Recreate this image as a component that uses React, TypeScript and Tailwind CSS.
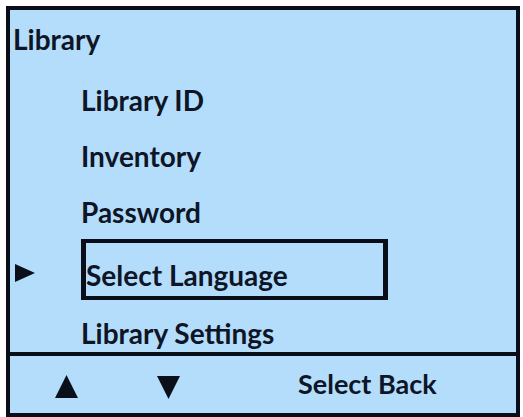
import React from "react";

const font = { fontFamily: "Lato, 'Open Sans', sans-serif" };

function Up() {
  return (
    <svg width="23" height="23" viewBox="0 0 23 23">
      <polygon points="11.5,0 23,23 0,23" fill="#0b0f1a" />
    </svg>
  );
}
function Down() {
  return (
    <svg width="23" height="23" viewBox="0 0 23 23">
      <polygon points="0,0 23,0 11.5,23" fill="#0b0f1a" />
    </svg>
  );
}
function Right() {
  return (
    <svg width="20" height="18" viewBox="0 0 20 18">
      <polygon points="0,0 20,9 0,18" fill="#0b0f1a" />
    </svg>
  );
}

export default function App() {
  return (
    <div className="w-[523px] h-[417px] bg-white pt-[6px] pl-[6px] overflow-hidden" style={font}>
      <div className="w-[514px] h-[411px] border-4 border-[#0a0e18] bg-[#b4ddfb] flex flex-col text-[#0d1526] font-bold">
        <div className="h-[346px] border-b-4 border-[#0a0e18] flex flex-col text-[28px] leading-[30px]">
          <div className="mt-[14px] pl-[3px]">Library</div>
          <div className="mt-[31px] pl-[71px]">Library ID</div>
          <div className="mt-[26px] pl-[71px]">Inventory</div>
          <div className="mt-[26px] pl-[71px]">Password</div>
          <div className="mt-[12px] pl-[5px] flex items-start">
            <div className="mt-[25px] w-[20px] h-[18px]">
              <Right />
            </div>
            <div className="ml-[46px] w-[307px] h-[61px] border-x-[5px] border-y-4 border-[#0a0e18] pt-[17px]">
              Select Language
            </div>
          </div>
          <div className="mt-[18px] pl-[71px]">Library Settings</div>
        </div>
        <div className="h-[53px] flex items-start">
          <div className="ml-[45px] w-[23px] h-[23px] mt-[19px]">
            <Up />
          </div>
          <div className="ml-[79px] w-[23px] h-[23px] mt-[20px]">
            <Down />
          </div>
          <div className="ml-[118px] text-[27px] leading-[30px] mt-[13px]">Select Back</div>
        </div>
      </div>
    </div>
  );
}
